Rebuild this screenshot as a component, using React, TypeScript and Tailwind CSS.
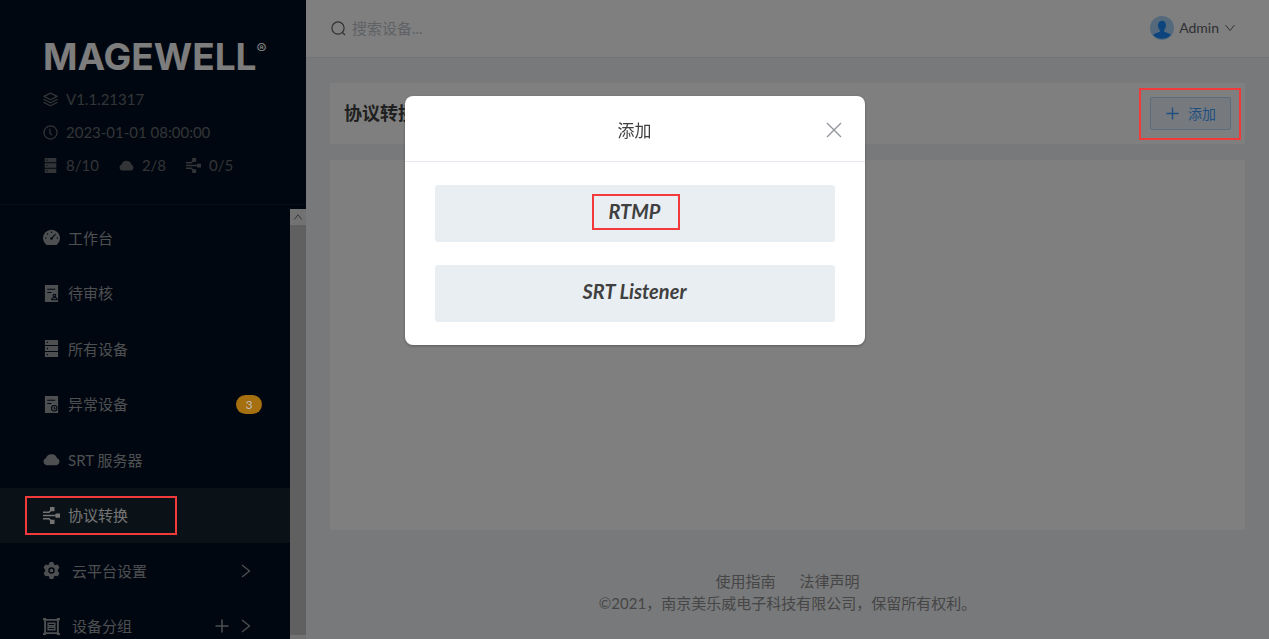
import React from "react";

type IconProps = { className?: string };

const Layers = ({ className }: IconProps) => (
  <svg viewBox="0 0 16 16" className={className} fill="none" stroke="currentColor" strokeWidth="1.3" strokeLinejoin="round" strokeLinecap="round">
    <path d="M8 1.2 15 4.700 8 8.200 1 4.700ZM1 8l7 3.500L15 8M1 11.200l7 3.500 7-3.500" />
  </svg>
);
const Clock = ({ className }: IconProps) => (
  <svg viewBox="0 0 16 16" className={className} fill="none" stroke="currentColor" strokeWidth="1.3" strokeLinecap="round">
    <circle cx="8" cy="8" r="7" />
    <path d="M7.300 4.500V8.500L9.300 10.500" />
  </svg>
);
const Server = ({ className }: IconProps) => (
  <svg viewBox="0 0 16 16" className={className} fill="currentColor" fillRule="evenodd">
    <path d="M1.800 0h12.400v4.600h-12.400ZM3.600 1.700v1.200H4.800V1.700ZM1.800 5.700h12.400v4.600h-12.400ZM3.600 7.400v1.200H4.800V7.400ZM1.800 11.400h12.400V16h-12.400ZM3.600 13.100v1.200H4.800V13.100Z" />
  </svg>
);
const Cloud = ({ className }: IconProps) => (
  <svg viewBox="0 0 16 16" className={className} fill="currentColor">
    <path d="M3.300 13.300A3.300 3.300 0 0 1 2.800 6.900a5.400 5.400 0 0 1 10.400 0 3.300 3.300 0 0 1-.5 6.400Z" />
  </svg>
);
const Convert = ({ className }: IconProps) => (
  <svg viewBox="0 0 16 16" className={className} fill="currentColor">
    <path d="M6.600 0h4.200v4h-4.200ZM6.600 12h4.200v4h-4.200ZM11.800 6h4.200v4h-4.200Z" />
    <path d="M0 5h5.600L8 2.600M0 8h12.500M0 11h5.600L8 13.400" fill="none" stroke="currentColor" strokeWidth="1.500" />
  </svg>
);
const Gauge = ({ className }: IconProps) => (
  <svg viewBox="0 0 16 16" className={className}>
    <path d="M3.200 15A8 8 0 1 1 12.800 15Z" fill="currentColor" />
    <g fill="#020f20">
      <circle cx="2.600" cy="8.500" r=".7" />
      <circle cx="4.300" cy="4.600" r=".7" />
      <circle cx="8" cy="3" r=".7" />
      <circle cx="13.400" cy="8.500" r=".7" />
      <circle cx="8" cy="9" r="1.200" />
    </g>
    <path d="M8 9 11.800 4.800" stroke="#020f20" strokeWidth="1" />
  </svg>
);
const Review = ({ className }: IconProps) => (
  <svg viewBox="0 0 16 16" className={className}>
    <path d="M1.800 0h12.400v16h-12.400Z" fill="currentColor" />
    <g fill="none" stroke="#020f20" strokeWidth="1">
      <path d="M4 4h7.500M4 7h4" />
      <circle cx="10.800" cy="10" r="1.200" />
      <path d="M8.200 13.800c0-2.800 5.200-2.800 5.200 0Z" />
    </g>
  </svg>
);
const Abnormal = ({ className }: IconProps) => (
  <svg viewBox="0 0 16 16" className={className}>
    <path d="M1.800 0h12.400v16h-12.400Z" fill="currentColor" />
    <g fill="none" stroke="#020f20" strokeWidth="1">
      <path d="M4 4h7.500M4 7h4" />
      <circle cx="10.600" cy="11.600" r="2.600" />
      <path d="M10.600 10v2h1.200" />
    </g>
  </svg>
);
const Gear = ({ className }: IconProps) => (
  <svg viewBox="0 0 16 16" className={className}>
    <path fill="currentColor" stroke="currentColor" strokeLinejoin="round" d="M6.600.6h2.800l.5 2 1.500.9 2.100-.6 1.400 2.400-1.500 1.600v2l1.500 1.700-1.400 2.400-2.100-.6-1.500.9-.5 2.100H6.600l-.5-2.100-1.500-.9-2.100.6-1.400-2.400 1.500-1.700v-2L1.100 5.300 2.500 2.900l2.100.6 1.500-.9Z" />
    <circle cx="8" cy="8" r="2.400" fill="none" stroke="#020f20" strokeWidth="1.300" />
  </svg>
);
const Group = ({ className }: IconProps) => (
  <svg viewBox="0 0 16 16" className={className} fill="none" stroke="currentColor">
    <path d="M2 1v14M14 1v14M1 1.800h14M1 14.200h14" strokeWidth="1.800" />
    <path d="M4.800 5h6.400v2.300h-6.400ZM4.800 8.800h6.400V11h-6.400Z" strokeWidth="1.300" />
    <path d="M0 1h3M13 1h3M0 15h3M13 15h3" strokeWidth="2" />
  </svg>
);
const Chevron = ({ className }: IconProps) => (
  <svg viewBox="0 0 16 16" className={className} fill="none" stroke="currentColor" strokeWidth="1.300">
    <path d="M4 2l7.500 6L4 14" />
  </svg>
);
const Plus = ({ className }: IconProps) => (
  <svg viewBox="0 0 16 16" className={className} fill="none" stroke="currentColor" strokeWidth="1.500">
    <path d="M8 1.500v13M1.500 8h13" />
  </svg>
);

const items = [
  { label: "工作台", Icon: Gauge },
  { label: "待审核", Icon: Review },
  { label: "所有设备", Icon: Server },
  { label: "异常设备", Icon: Abnormal, badge: 3 },
  { label: "SRT 服务器", Icon: Cloud },
  { label: "协议转换", Icon: Convert, active: true },
  { label: "云平台设置", Icon: Gear, submenu: true },
  { label: "设备分组", Icon: Group, submenu: true, addable: true },
];

function Sidebar() {
  return (
    <aside className="flex w-[306px] shrink-0 flex-col bg-[#020f20] text-[15px]">
      <div className="flex h-[205px] shrink-0 flex-col border-b border-[#111c2b] px-[43px] pt-[37px] text-[#66696e]">
        <div className="flex items-start font-[Inter,sans-serif] leading-10 text-[#fafafa]">
          <span className="text-[37px] font-bold">MAGEWELL</span>
          <sup className="top-0 text-[15px] leading-6">®</sup>
        </div>
        <div className="mt-[11px] flex h-[22px] items-center gap-2"><Layers className="size-[15px]" />V1.1.21317</div>
        <div className="mt-[11px] flex h-[22px] items-center gap-2"><Clock className="size-[15px]" />2023-01-01 08:00:00</div>
        <div className="mt-[11px] flex h-[22px] items-center gap-5">
          <span className="flex items-center gap-2"><Server className="size-[15px]" />8/10</span>
          <span className="flex items-center gap-2"><Cloud className="size-[15px]" />2/8</span>
          <span className="flex items-center gap-2"><Convert className="size-[15px]" />0/5</span>
        </div>
      </div>
      <div className="flex min-h-0 flex-1">
        <nav className="min-w-0 flex-1 overflow-hidden pt-[5px]">
          <ul className="grid h-[444px] grid-rows-8">
            {items.map(({ label, Icon, badge, active, submenu, addable }) => (
              <li key={label} className="grid">
                <a
                  href="#"
                  className={
                    "relative flex items-center pl-[43px] pr-7 " +
                    (active ? "bg-[#15222f] text-[#e8e8e8] " : "text-[#9b9ea3] ") +
                    (submenu ? "gap-3" : "gap-2")
                  }
                >
                  <Icon className="size-[17px] shrink-0" />
                  <span className="flex-1">{label}</span>
                  {badge && <span className="relative z-50 h-[19px] w-[26px] rounded-full bg-[#a67011] text-center text-[12px] leading-[19px] text-[#c0c0c0]">{badge}</span>}
                  {addable && <Plus className="size-4" />}
                  {submenu && <Chevron className={addable ? "-ml-1 mr-2 size-4" : "mr-2 size-4"} />}
                  {active && <span className="absolute left-[25px] top-2 z-50 h-[39px] w-[152px] border-2 border-[#f23a3a]" />}
                </a>
              </li>
            ))}
          </ul>
        </nav>
        <div className="mt-1 flex w-4 flex-col bg-[#e4e4e4]">
          <div className="flex h-4 items-center justify-center text-[#505050]">
            <Chevron className="size-2.5 -rotate-90" />
          </div>
          <div className="mb-1 flex-1 bg-[#c0c0c0]" />
        </div>
      </div>
    </aside>
  );
}

function AddDialog() {
  return (
    <div className="fixed inset-0 z-40 flex items-start justify-center bg-black/50 pt-[15vh]">
      <div role="dialog" aria-labelledby="dialog-title" className="w-[460px] rounded-lg bg-white text-[#404040] shadow-[0_1px_3px_rgba(0,0,0,0.3)]">
        <div className="relative flex h-[66px] items-center justify-center border-b border-[#e6e8ef] pt-1">
          <h2 id="dialog-title" className="text-[17px]">添加</h2>
          <button aria-label="关闭" className="absolute right-[23px] text-[#909399]">
            <svg viewBox="0 0 16 16" className="size-4" fill="none" stroke="currentColor" strokeWidth="1.300"><path d="m1 1 14 14M15 1 1 15" /></svg>
          </button>
        </div>
        <div className="flex flex-col gap-[23px] px-[30px] py-[23px]">
          <button className="relative flex h-[57px] items-center justify-center rounded-[3px] bg-[#e9eef3] pb-1 text-[20px] font-bold italic">
            RTMP
            <span className="absolute left-1/2 top-[9px] h-[36px] w-[88px] -translate-x-[43px] border-2 border-[#f23a3a]" />
          </button>
          <button className="flex h-[57px] items-center justify-center rounded-[3px] bg-[#e9eef3] pb-1 text-[20px] font-bold italic">SRT Listener</button>
        </div>
      </div>
    </div>
  );
}

export default function App() {
  return (
    <div className="flex h-screen overflow-hidden bg-[#f0f2f5] font-[Lato,'Noto_Sans_CJK_SC',sans-serif]">
      <Sidebar />
      <main className="flex min-w-0 flex-1 flex-col">
        <header className="flex h-[58px] shrink-0 items-center justify-between border-b border-[#e4e7ec] bg-white pl-[25px] pr-[33px]">
          <label className="flex items-center gap-1.5 text-[#606266]">
            <svg viewBox="0 0 16 16" className="size-[15px]" fill="none" stroke="currentColor" strokeWidth="1.300"><circle cx="7.500" cy="7.500" r="6.500" /><path d="m12 12 3 3" /></svg>
            <input aria-label="搜索设备" placeholder="搜索设备..." className="w-52 bg-transparent text-[15px] outline-none placeholder:text-[#c0c4cc]" />
          </label>
          <button className="flex items-center gap-[5px] pb-0.5 text-[14px] text-[#606266]">
            <svg viewBox="0 0 24 24" className="size-6">
              <circle cx="12" cy="12" r="12" fill="#a9d4f8" />
              <path d="M8 9a4 4.300 0 0 1 8 0c0 2.800-1 4.300-2 5.200v1.300l5.800 2.500a1 1 0 0 1 .5 1.500A12 12 0 0 1 3.700 19.500a1 1 0 0 1 .5-1.500L10 15.500v-1.300C9 13.300 8 11.800 8 9Z" fill="#1989fa" />
            </svg>
            Admin
            <Chevron className="size-3 rotate-90" />
          </button>
        </header>
        <div className="flex flex-1 flex-col px-6 pt-[25px]">
          <section className="flex h-[61px] shrink-0 items-center justify-between bg-white px-[14px]">
            <h1 className="text-[18px] font-bold text-[#404040]">协议转换</h1>
            <button className="relative flex h-[33px] w-[81px] items-center justify-center gap-2 rounded-[2px] border border-[#b3d8ff] bg-[#ecf5ff] text-[14px] text-[#409eff]">
              <Plus className="size-[15px]" />
              添加
              <span className="absolute -left-3 -top-2.5 z-50 h-[52px] w-[102px] border-2 border-[#f23a3a]" />
            </button>
          </section>
          <section className="mt-4 min-h-0 flex-1 bg-white" />
          <footer className="flex h-[109px] shrink-0 flex-col items-center pt-10 text-[15px] leading-[22px] text-[#8c8c8c]">
            <div className="flex gap-6"><a href="#">使用指南</a><a href="#">法律声明</a></div>
            <p>©2021，南京美乐威电子科技有限公司，保留所有权利。</p>
          </footer>
        </div>
      </main>
      <AddDialog />
    </div>
  );
}
